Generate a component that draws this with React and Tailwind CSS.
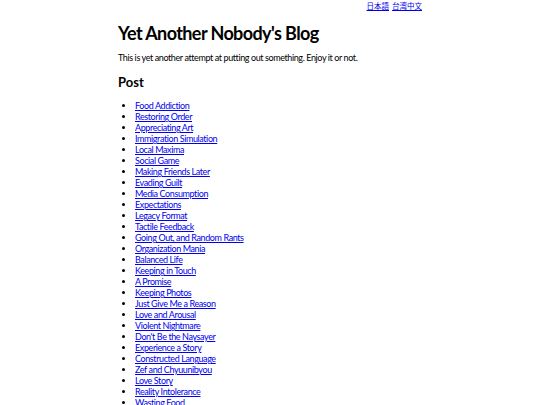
const posts = [
  "Food Addiction",
  "Restoring Order",
  "Appreciating Art",
  "Immigration Simulation",
  "Local Maxima",
  "Social Game",
  "Making Friends Later",
  "Evading Guilt",
  "Media Consumption",
  "Expectations",
  "Legacy Format",
  "Tactile Feedback",
  "Going Out, and Random Rants",
  "Organization Mania",
  "Balanced Life",
  "Keeping in Touch",
  "A Promise",
  "Keeping Photos",
  "Just Give Me a Reason",
  "Love and Arousal",
  "Violent Nightmare",
  "Don't Be the Naysayer",
  "Experience a Story",
  "Constructed Language",
  "Zef and Chyuunibyou",
  "Love Story",
  "Reality Intolerance",
  "Wasting Food",
];

export default function App() {
  return (
    <div className="min-h-screen bg-white text-black font-['Lato','Noto_Sans_CJK_JP',sans-serif]">
      <div className="mx-auto w-[304px]">
        {/* LANGUAGE LINKS */}
        <div className="flex justify-end gap-[3px] text-[7.5px] leading-[12px] font-['Noto_Sans_CJK_JP',sans-serif]">
          <a href="#" className="text-[#0000ee] underline">日本語</a>
          <a href="#" className="text-[#0000ee] underline">台湾中文</a>
        </div>

        <h1 className="mt-[10px] text-[18px] leading-[22px] font-bold tracking-[-0.6px]">
          Yet Another Nobody's Blog
        </h1>

        <p className="mt-[8px] text-[9px] leading-[11px] tracking-[-0.4px]">
          This is yet another attempt at putting out something. Enjoy it or not.
        </p>

        <h2 className="mt-[11px] text-[13px] leading-[16px] font-bold">Post</h2>

        {/* POST LIST */}
        <ul className="mt-[10px] list-disc pl-[17px] text-[9px] leading-[11px] tracking-[-0.4px]">
          {posts.map((p) => (
            <li key={p}>
              <a href="#" className="text-[#0000ee] underline">
                {p}
              </a>
            </li>
          ))}
        </ul>
      </div>
    </div>
  );
}
